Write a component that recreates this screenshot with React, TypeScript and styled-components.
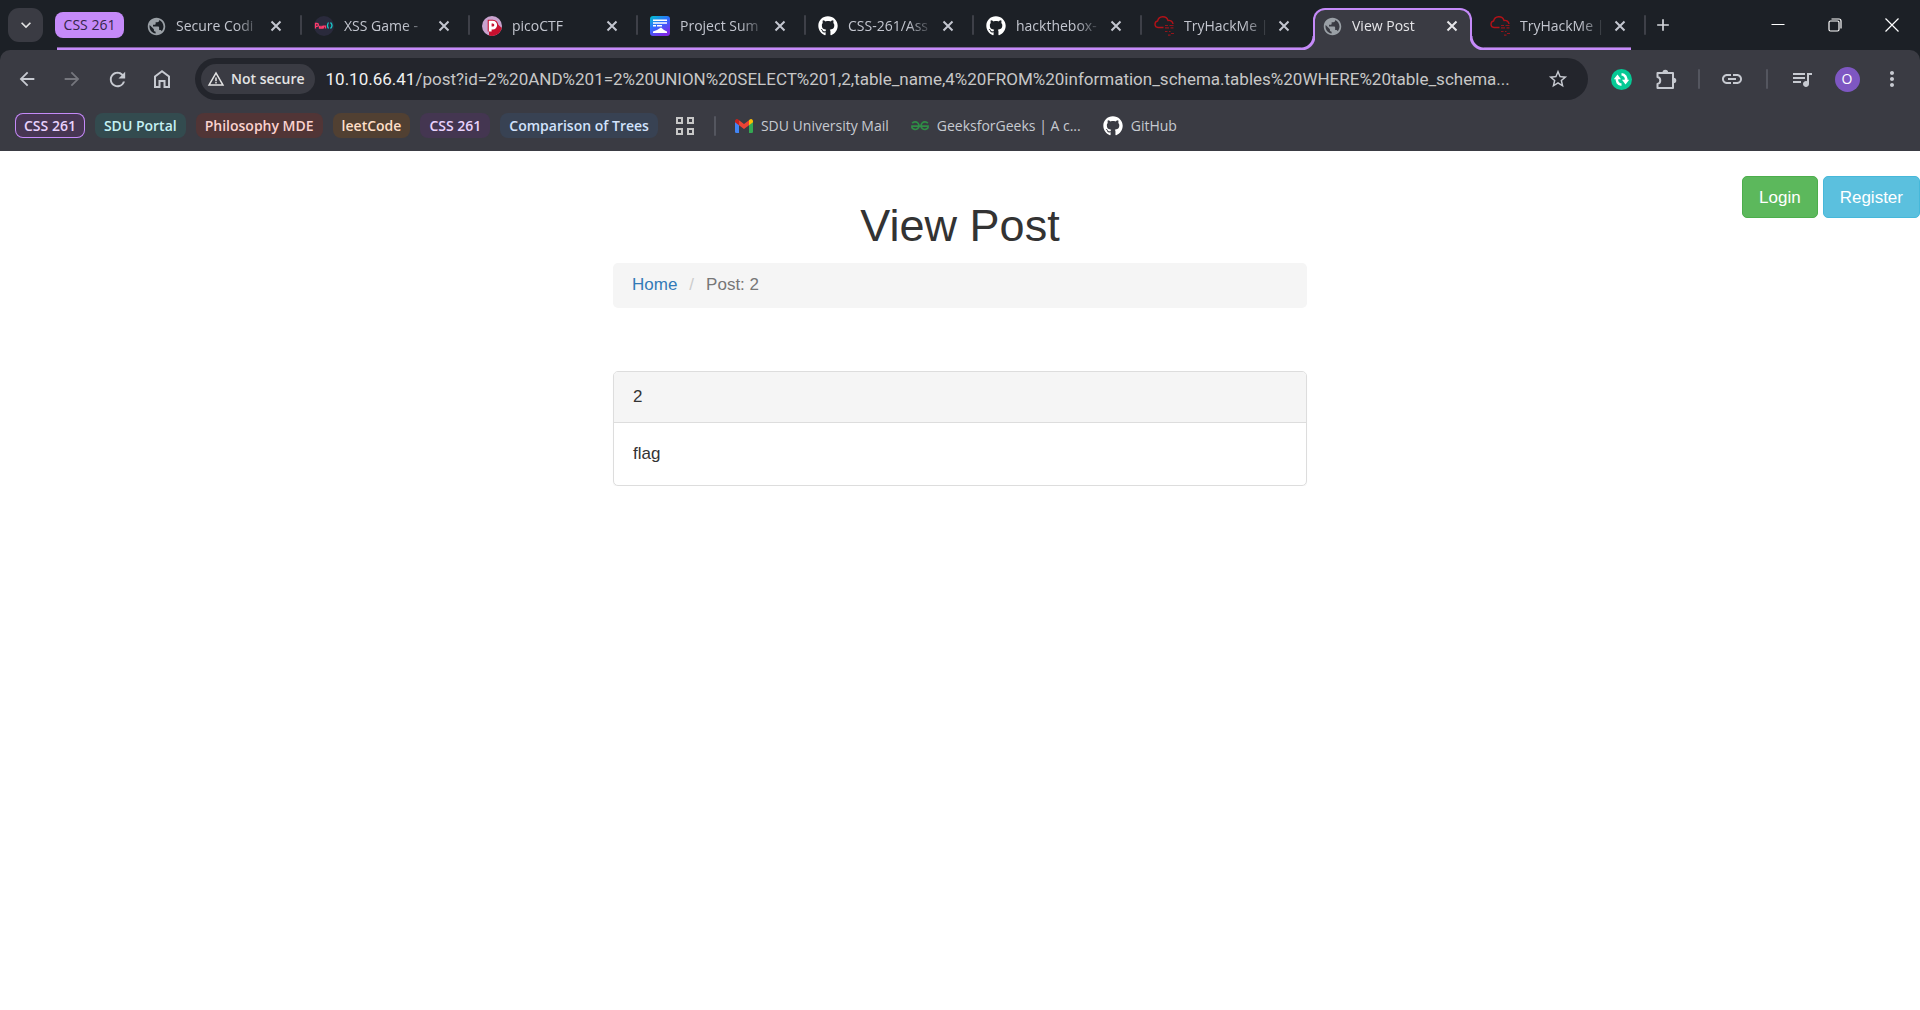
import React from 'react';
import styled, { createGlobalStyle, css } from 'styled-components';
import { FaGithub } from 'react-icons/fa';
import {
  MdPublic, MdKeyboardArrowDown, MdArrowBack, MdArrowForward, MdRefresh,
  MdWarningAmber, MdStarBorder, MdLink, MdQueueMusic, MdMoreVert, MdAdd,
} from 'react-icons/md';

const UI = '"Open Sans", "Noto Sans", sans-serif';
const WEB = '"Liberation Sans", Arial, Helvetica, sans-serif';
const STRIP = '#1c2026';
const BAR = '#3a3b43';
const GROUP = '#c58af9';

const GlobalStyle = createGlobalStyle`
  *, *::before, *::after { box-sizing: border-box; }
  body { margin: 0; background: #fff; }
  button, input { font: inherit; color: inherit; border: 0; margin: 0; padding: 0; background: none; }
  svg { display: block; flex: none; }
`;

const TabStrip = styled.header`
  display: flex;
  align-items: center;
  height: 50px;
  padding-left: 8px;
  background: ${STRIP};
  font: 14px/20px ${UI};
  color: #c3c6cf;
`;

const TabSearch = styled.button`
  display: grid;
  place-items: center;
  flex: none;
  width: 35px;
  height: 34px;
  border-radius: 11px;
  background: ${BAR};
  color: #e3e3e3;
`;

const TabGroup = styled.div`
  display: flex;
  align-items: center;
  flex: 0 1 1590px;
  min-width: 0;
  height: 50px;
  margin-left: 12px;
`;

const GroupLabel = styled.button`
  flex: none;
  width: 69px;
  height: 26px;
  border-radius: 8px;
  background: ${GROUP};
  color: #33254a;
  white-space: nowrap;
`;

const groupLine = (start: number, end: number) => css`
  &::before {
    content: '';
    position: absolute;
    left: ${start}px;
    right: ${end}px;
    bottom: 0;
    height: 3px;
    background: ${GROUP};
    border-top: 1px solid #80609f;
  }
`;

const LabelCell = styled.div`
  position: relative;
  display: flex;
  align-items: center;
  flex: none;
  width: 78px;
  height: 50px;
  ${groupLine(2, 0)}
`;

const Tab = styled.div<{ $active?: boolean; $last?: boolean }>`
  position: relative;
  display: flex;
  align-items: center;
  flex: 1 1 0;
  min-width: 0;
  height: 50px;
  padding: 1px 15px 0 14px;
  ${p => !p.$active && groupLine(0, p.$last ? 14 : 0)}
  ${p => p.$active && css`color: #e6e6e9;`}
`;

const ActiveShape = styled.div`
  position: absolute;
  inset: 8px 5px 0 4px;
  z-index: 1;
  border: 2px solid ${GROUP};
  border-bottom: 0;
  border-radius: 12px 12px 0 0;
  background: ${BAR};
  &::before, &::after {
    content: '';
    position: absolute;
    bottom: 0;
    width: 14px;
    height: 14px;
  }
  &::before {
    right: 100%;
    background: radial-gradient(circle at 0 0, ${STRIP} 11px, ${GROUP} 12px, ${GROUP} 14px, ${BAR} 15px);
  }
  &::after {
    left: 100%;
    background: radial-gradient(circle at 100% 0, ${STRIP} 11px, ${GROUP} 12px, ${GROUP} 14px, ${BAR} 15px);
  }
`;

const TabLink = styled.button`
  position: relative;
  z-index: 2;
  display: flex;
  align-items: center;
  gap: 10px;
  flex: 1;
  min-width: 0;
  text-align: left;
`;

const Favicon = styled.span`
  display: grid;
  place-items: center;
  flex: none;
  width: 20px;
  height: 20px;
  margin-left: -1px;
`;

const TabTitle = styled.span`
  flex: 1;
  min-width: 0;
  overflow: hidden;
  white-space: nowrap;
  mask-image: linear-gradient(90deg, #000 calc(100% - 26px), transparent);
`;

const TabClose = styled.button`
  position: relative;
  z-index: 2;
  display: grid;
  place-items: center;
  flex: none;
  width: 20px;
  height: 20px;
  margin-left: 4px;
`;

const TabDivider = styled.i`
  position: absolute;
  right: -1px;
  top: 15px;
  width: 2px;
  height: 20px;
  border-radius: 1px;
  background: #3e4048;
`;

const NewTab = styled.button`
  display: grid;
  place-items: center;
  flex: none;
  width: 36px;
  height: 36px;
  color: #d5d7dd;
`;

const WindowButtons = styled.div`
  display: flex;
  margin-left: auto;
`;

const WindowButton = styled.button`
  display: grid;
  place-items: center;
  width: 57px;
  height: 48px;
  color: #fff;
`;

const ToolbarFrame = styled.div`
  background: ${STRIP};
`;

const Toolbar = styled.div`
  display: flex;
  align-items: center;
  gap: 9px;
  height: 58px;
  padding: 8px 10px 8px 9px;
  border-radius: 10px 10px 0 0;
  background: ${BAR};
  color: #c7cad1;
`;

const ToolButton = styled.button<{ $dim?: boolean }>`
  display: grid;
  place-items: center;
  flex: none;
  width: 36px;
  height: 36px;
  color: ${p => (p.$dim ? '#75767d' : 'inherit')};
`;

const Omnibox = styled.form`
  display: flex;
  align-items: center;
  flex: 1;
  min-width: 0;
  height: 42px;
  margin: 0 6px;
  padding: 0 19px 0 6px;
  border-radius: 21px;
  background: #23252c;
  font: 17px/24px Roboto, ${UI};
`;

const StarButton = styled.button`
  flex: none;
`;

const Security = styled.button`
  display: flex;
  align-items: center;
  gap: 6px;
  flex: none;
  height: 30px;
  padding: 0 10px 0 6px;
  border-radius: 15px;
  background: ${BAR};
  color: #e3e3e3;
  font: 600 14px/20px ${UI};
`;

const Host = styled.label`
  flex: none;
  margin-left: 11px;
  color: #f1f1f1;
`;

const Address = styled.input`
  flex: 1;
  min-width: 0;
  height: 24px;
  outline: 0;
  color: #c7c7c7;
`;

const Rule = styled.i<{ $gap: number }>`
  flex: none;
  width: 2px;
  height: 20px;
  margin: 0 ${p => p.$gap}px;
  border-radius: 1px;
  background: #54565f;
`;

const Avatar = styled.span`
  display: grid;
  place-items: center;
  width: 25px;
  height: 25px;
  border-radius: 50%;
  background: #7e57c2;
  color: #fff;
  font: 14px/20px ${UI};
`;

const Bookmarks = styled.nav`
  display: flex;
  align-items: center;
  height: 43px;
  padding: 0 15px 8px;
  background: ${BAR};
  color: #c7cad1;
  font: 14px/20px ${UI};
  white-space: nowrap;
`;

const GroupChip = styled.button<{ $bg: string; $fg: string; $outline?: boolean }>`
  height: 25px;
  margin-right: 10px;
  padding: 0 9px;
  border-radius: 8px;
  background: ${p => p.$bg};
  color: ${p => p.$fg};
  font-weight: 600;
  box-shadow: ${p => (p.$outline ? `inset 0 0 0 1px ${GROUP}` : 'none')};
`;

const AppsButton = styled.button`
  margin-left: 7px;
`;

const Bookmark = styled.a`
  display: flex;
  align-items: center;
  gap: 8px;
  margin-right: 22px;
  color: inherit;
  text-decoration: none;
`;

const Page = styled.main`
  padding-top: 25px;
  background: #fff;
  color: #333;
  font: 17px/25px ${WEB};
`;

const Account = styled.div`
  display: flex;
  justify-content: flex-end;
  gap: 5px;
  height: 0;
`;

const AccountButton = styled.button<{ $bg: string; $edge: string }>`
  height: 42px;
  padding: 0 16px;
  border: 1px solid ${p => p.$edge};
  border-radius: 5px;
  background: ${p => p.$bg};
  color: #fff;
`;

const Column = styled.div`
  max-width: 694px;
  margin: 0 auto;
  padding-top: 25px;
`;

const Title = styled.h1`
  margin: 0 0 12px;
  font-size: 45px;
  line-height: 50px;
  font-weight: 400;
  text-align: center;
`;

const Breadcrumb = styled.ol`
  display: flex;
  height: 45px;
  margin: 0 0 63px;
  padding: 9px 19px;
  border-radius: 5px;
  background: #f5f5f5;
  color: #777;
  list-style: none;
  li + li::before {
    content: '/';
    padding: 0 12px;
    color: #ccc;
  }
  a { color: #337ab7; text-decoration: none; }
`;

const Panel = styled.section`
  border: 1px solid #ddd;
  border-radius: 5px;
  box-shadow: 0 1px 1px rgba(0, 0, 0, 0.05);
`;

const PanelHeading = styled.div`
  padding: 12px 19px 13px;
  border-bottom: 1px solid #ddd;
  border-radius: 4px 4px 0 0;
  background: #f5f5f5;
`;

const PanelBody = styled.div`
  padding: 18px 19px 19px;
`;

const Globe = () => <MdPublic size={21} color="#9aa0a6" />;

const Cross = () => (
  <svg width="12" height="12" viewBox="0 0 12 12" stroke="currentColor" strokeWidth="2"><path d="M1.500 1.500l9 9M10.500 1.500l-9 9" /></svg>
);

const Pwn = () => (
  <svg width="20" height="20" viewBox="0 0 20 20">
    <circle cx="10" cy="10" r="10" fill="#2a2a3c" />
    <g fill="none" strokeWidth="1.3">
      <path d="M1.500 12.500V7.500h1.500a1.400 1.400 0 0 1 0 2.800H1.500M5.500 9.700v2.300h1.500V9.700M7 12h1.500V9.700M9.500 12.600V10.200h2v2.400" stroke="#ff3b6b" />
      <path d="M14.500 6.500q-2 3 0 6M16.500 6.500q3 3 0 6" stroke="#19c8c8" />
    </g>
  </svg>
);

const Pico = () => (
  <svg width="20" height="20" viewBox="0 0 20 20">
    <circle cx="10" cy="10" r="10" fill="#c9a3cf" />
    <path d="M13 5.500l6.700 6.500A10 10 0 0 1 7 19.500V15z" fill="#c8102e" />
    <path d="M8.200 15.500V6.200h2.600a2.900 2.900 0 0 1 0 5.800H8.500" fill="none" stroke="#c8102e" strokeWidth="5" />
    <path d="M8.200 15.500V6.200h2.600a2.900 2.900 0 0 1 0 5.800H8.500" fill="none" stroke="#fff" strokeWidth="2.800" />
  </svg>
);

const Project = () => (
  <svg width="20" height="20" viewBox="0 0 20 20">
    <defs>
      <linearGradient id="project" x1="0" y1="0" x2="0.6" y2="1">
        <stop offset="0" stopColor="#00c4cc" />
        <stop offset="0.5" stopColor="#2f6bff" />
        <stop offset="1" stopColor="#7d2ae8" />
      </linearGradient>
    </defs>
    <rect width="20" height="20" rx="3" fill="url(#project)" />
    <path d="M3 3.500h14v1.500H3zM3 6.300h14v1.500H3zM3 9.100h3v1.400H3zM7 9.100h5v1.400H7zM3 17v-1.500l4-1.500 4-2.500 3 2.500 3 1.500V17z" fill="#fff" />
  </svg>
);

const TryHackMe = () => (
  <svg width="20" height="20" viewBox="0 0 20 20" fill="none" stroke="#b11218" strokeWidth="1.400">
    <path d="M9.500 11.500H4A3.300 3.300 0 0 1 3.600 5 5.400 5.400 0 0 1 14 4.500a4 4 0 0 1 5 3.500" />
    <path d="M11 9.500h3M15.500 9.500h4M11 11.800h4M16.500 11.800h3M11 15.500h2.500M15 15.500h1.500M17 17.500h3M14 19.200h2.500" strokeWidth="1.200" opacity="0.800" />
  </svg>
);

const Gmail = () => (
  <svg width="18" height="14" viewBox="0 0 18 14">
    <path d="M0 2.500V12.800A1.200 1.200 0 0 0 1.200 14H4V5z" fill="#4285f4" />
    <path d="M18 2.500V12.800A1.200 1.200 0 0 1 16.800 14H14V5z" fill="#34a853" />
    <path d="M14 1.200V6.200l4-3V2a2 2 0 0 0-3.200-1.500z" fill="#fbbc04" />
    <path d="M4 6.200V1.200l5 3.700 5-3.700V6.200L9 10z" fill="#ea4335" />
    <path d="M0 2V3.200l4 3V1.200L3.200.500A2 2 0 0 0 0 2z" fill="#c5221f" />
  </svg>
);

const Geeks = () => (
  <svg width="18" height="10" viewBox="0 0 18 10" fill="none" stroke="#2f8d46" strokeWidth="1.700">
    <path d="M1.200 2.300A3.800 3.800 0 1 1 1 6.800L1 5.200H17V6.800A3.800 3.800 0 1 1 16.800 2.300" />
  </svg>
);

const Apps = () => (
  <svg width="20" height="20" viewBox="0 0 20 20" fill="none" stroke="#c7c7c7" strokeWidth="2">
    <path d="M2 2h5v5H2zM13 2h5v5h-5zM2 13h5v5H2zM13 13h5v5h-5z" />
  </svg>
);

const House = () => (
  <svg width="20" height="20" viewBox="0 0 20 20" fill="none" stroke="currentColor" strokeWidth="2">
    <path d="M3 7.500L10 2.200l7 5.300V18h-4.500v-6h-5v6H3z" />
  </svg>
);

const Puzzle = () => (
  <svg width="22" height="22" viewBox="0 0 22 22">
    <path d="M2.500 5H18v15H2.500v-4a3.600 3.600 0 0 0 0-7z" fill="none" stroke="currentColor" strokeWidth="2" strokeLinejoin="round" />
    <path d="M7.500 4.500a2.800 2.800 0 0 1 5.600 0zM18.500 9.700a2.800 2.800 0 0 1 0 5.600z" fill="currentColor" />
  </svg>
);

const GreenSync = () => (
  <svg width="21" height="21" viewBox="0 0 21 21">
    <circle cx="10.500" cy="10.500" r="10.500" fill="#06c995" />
    <g fill="none" stroke="#fff" strokeWidth="2.600">
      <path d="M10.500 15.800A5 5 0 0 1 6.200 9M10.500 5.200A5 5 0 0 1 14.800 12" />
    </g>
    <path d="M2.800 10.200L6.500 5.500l3.500 4.700zM18.200 10.800L14.500 15.500 11 10.800z" fill="#fff" />
  </svg>
);

const Minimize = () => (
  <svg width="14" height="14" viewBox="0 0 14 14" stroke="currentColor"><path d="M.500 6.500h13" /></svg>
);

const Restore = () => (
  <svg width="14" height="14" viewBox="0 0 14 14" fill="none" stroke="currentColor">
    <rect x="1" y="3" width="10" height="10" rx="1.500" strokeWidth="1.200" />
    <path d="M3.500 1H11a2 2 0 0 1 2 2v7.500" strokeWidth="1.200" />
  </svg>
);

const CloseWindow = () => (
  <svg width="14" height="14" viewBox="0 0 14 14" stroke="currentColor" strokeWidth="1.200"><path d="M.500.500l13 13M13.500.500l-13 13" /></svg>
);

const tabs = [
  { title: 'Secure Codi', icon: <Globe /> },
  { title: 'XSS Game -', icon: <Pwn /> },
  { title: 'picoCTF', icon: <Pico /> },
  { title: 'Project Sum', icon: <Project /> },
  { title: 'CSS-261/Ass', icon: <FaGithub size={20} color="#fff" /> },
  { title: 'hackthebox-', icon: <FaGithub size={20} color="#fff" /> },
  { title: 'TryHackMe |', icon: <TryHackMe /> },
  { title: 'View Post', icon: <Globe />, active: true },
  { title: 'TryHackMe |', icon: <TryHackMe /> },
];

const groups = [
  { name: 'CSS 261', bg: '#473653', fg: '#e9d2fd', outline: true },
  { name: 'SDU Portal', bg: '#334b4f', fg: '#c5f1f3' },
  { name: 'Philosophy MDE', bg: '#513536', fg: '#fad2cf' },
  { name: 'leetCode', bg: '#514032', fg: '#fedfc8' },
  { name: 'CSS 261', bg: '#443651', fg: '#e9d2fd' },
  { name: 'Comparison of Trees', bg: '#384253', fg: '#d2e3fc' },
];

const links = [
  { name: 'SDU University Mail', icon: <Gmail /> },
  { name: 'GeeksforGeeks | A c...', icon: <Geeks /> },
  { name: 'GitHub', icon: <FaGithub size={20} color="#fff" /> },
];

export default function App() {
  return (
    <>
      <GlobalStyle />
      <TabStrip>
        <TabSearch aria-label="Search tabs"><MdKeyboardArrowDown size={20} /></TabSearch>
        <TabGroup>
          <LabelCell><GroupLabel>CSS 261</GroupLabel></LabelCell>
          {tabs.map((t, i) => (
            <Tab key={i} $active={t.active} $last={i === tabs.length - 1}>
              {t.active && <ActiveShape />}
              <TabLink>
                <Favicon>{t.icon}</Favicon>
                <TabTitle>{t.title}</TabTitle>
              </TabLink>
              <TabClose aria-label="Close tab"><Cross /></TabClose>
              {!t.active && !tabs[i + 1]?.active && <TabDivider />}
            </Tab>
          ))}
        </TabGroup>
        <NewTab aria-label="New tab"><MdAdd size={20} /></NewTab>
        <WindowButtons>
          <WindowButton aria-label="Minimize"><Minimize /></WindowButton>
          <WindowButton aria-label="Restore"><Restore /></WindowButton>
          <WindowButton aria-label="Close"><CloseWindow /></WindowButton>
        </WindowButtons>
      </TabStrip>
      <ToolbarFrame>
        <Toolbar>
          <ToolButton aria-label="Back"><MdArrowBack size={22} /></ToolButton>
          <ToolButton aria-label="Forward" $dim><MdArrowForward size={22} /></ToolButton>
          <ToolButton aria-label="Reload"><MdRefresh size={23} /></ToolButton>
          <ToolButton aria-label="Home"><House /></ToolButton>
          <Omnibox>
            <Security type="button"><MdWarningAmber size={18} />Not secure</Security>
            <Host htmlFor="address">10.10.66.41</Host>
            <Address
              id="address"
              defaultValue="/post?id=2%20AND%201=2%20UNION%20SELECT%201,2,table_name,4%20FROM%20information_schema.tables%20WHERE%20table_schema..."
            />
            <StarButton type="button" aria-label="Bookmark this page"><MdStarBorder size={22} /></StarButton>
          </Omnibox>
          <ToolButton aria-label="Sync extension"><GreenSync /></ToolButton>
          <ToolButton aria-label="Extensions"><Puzzle /></ToolButton>
          <Rule $gap={5} />
          <ToolButton aria-label="Copy link"><MdLink size={24} /></ToolButton>
          <Rule $gap={7} />
          <ToolButton aria-label="Media"><MdQueueMusic size={24} /></ToolButton>
          <ToolButton aria-label="Profile"><Avatar>O</Avatar></ToolButton>
          <ToolButton aria-label="Menu"><MdMoreVert size={24} /></ToolButton>
        </Toolbar>
      </ToolbarFrame>
      <Bookmarks>
        {groups.map((g, i) => (
          <GroupChip key={i} $bg={g.bg} $fg={g.fg} $outline={g.outline}>{g.name}</GroupChip>
        ))}
        <AppsButton aria-label="Tab groups"><Apps /></AppsButton>
        <Rule $gap={19} />
        {links.map(l => (
          <Bookmark key={l.name} href="#">{l.icon}{l.name}</Bookmark>
        ))}
      </Bookmarks>
      <Page>
        <Account>
          <AccountButton $bg="#5cb85c" $edge="#4cae4c">Login</AccountButton>
          <AccountButton $bg="#5bc0de" $edge="#46b8da">Register</AccountButton>
        </Account>
        <Column>
          <Title>View Post</Title>
          <Breadcrumb>
            <li><a href="#">Home</a></li>
            <li>Post: 2</li>
          </Breadcrumb>
          <Panel>
            <PanelHeading>2</PanelHeading>
            <PanelBody>flag</PanelBody>
          </Panel>
        </Column>
      </Page>
    </>
  );
}
